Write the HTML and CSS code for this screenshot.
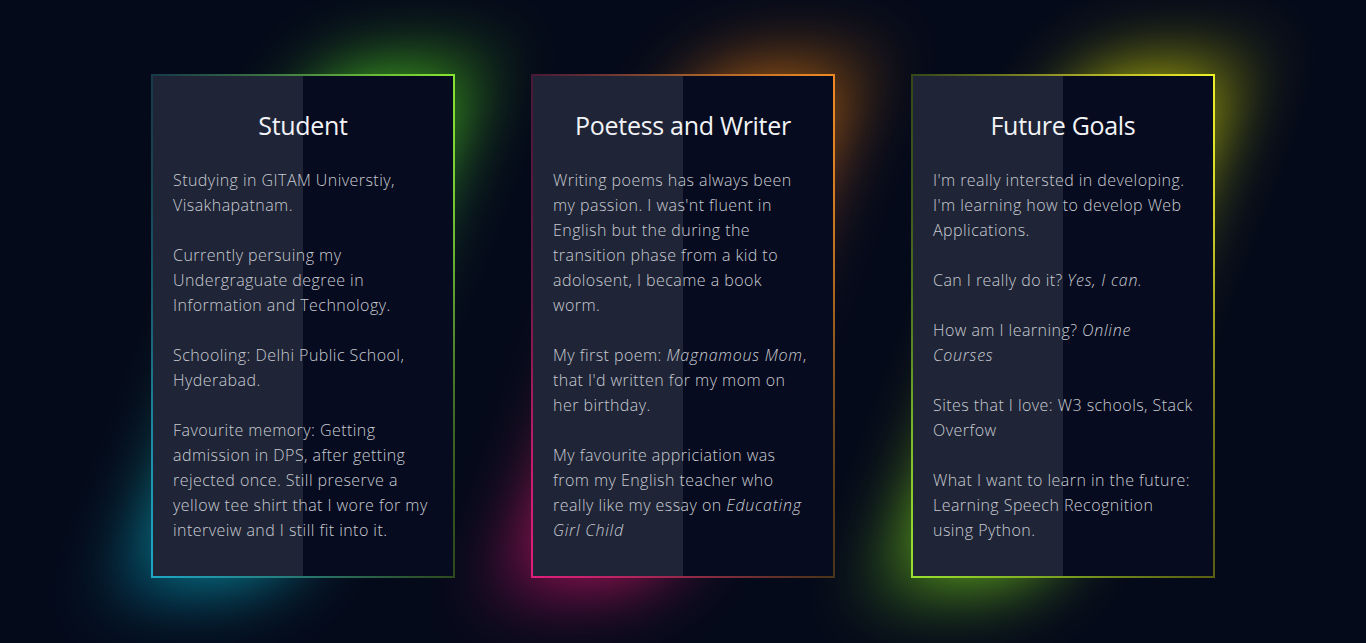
FILE: index.html
```html
<!DOCTYPE html>
<html lang="en">
<head>
<meta charset="utf-8">
<title>About Me</title>
<link rel="stylesheet" href="styles.css">
</head>
<body>
<main class="cards">
  <section class="card card-student">
    <div class="card-body">
      <h2 class="card-title">Student</h2>
      <p>Studying in GITAM Universtiy, Visakhapatnam.</p>
      <p>Currently persuing my Undergraguate degree in Information and Technology.</p>
      <p>Schooling: Delhi Public School, Hyderabad.</p>
      <p>Favourite memory: Getting admission in DPS, after getting rejected once. Still preserve a yellow tee shirt that I wore for my interveiw and I still fit into it.</p>
    </div>
  </section>
  <section class="card card-writer">
    <div class="card-body">
      <h2 class="card-title">Poetess and Writer</h2>
      <p>Writing poems has always been my passion. I was'nt fluent in English but the during the transition phase from a kid to adolosent, I became a book worm.</p>
      <p>My first poem: <em>Magnamous Mom</em>, that I'd written for my mom on her birthday.</p>
      <p>My favourite appriciation was from my English teacher who really like my essay on <em>Educating Girl Child</em></p>
    </div>
  </section>
  <section class="card card-goals">
    <div class="card-body">
      <h2 class="card-title">Future Goals</h2>
      <p>I'm really intersted in developing. I'm learning how to develop Web Applications.</p>
      <p>Can I really do it? <em>Yes, I can.</em></p>
      <p>How am I learning? <em>Online Courses</em></p>
      <p>Sites that I love: W3 schools, Stack Overfow</p>
      <p>What I want to learn in the future: Learning Speech Recognition using Python.</p>
    </div>
  </section>
</main>
</body>
</html>
```
FILE: styles.css
```css
* { box-sizing: border-box; }

html, body {
  margin: 0;
  height: 100%;
}

body {
  background: #050a1a;
  font-family: "Open Sans", "Liberation Sans", sans-serif;
  font-weight: 300;
  overflow: hidden;
}

.cards {
  display: flex;
  justify-content: center;
  align-items: flex-start;
  gap: 76px;
  padding-top: 74px;
}

.card {
  position: relative;
  width: 304px;
  height: 504px;
  padding: 2px;
}

.card::before {
  content: "";
  position: absolute;
  top: 0;
  bottom: 0;
  left: 25%;
  width: 50%;
  z-index: -1;
  transform: skewX(-20deg);
  filter: blur(40px);
  opacity: 0.85;
}

.card-student {
  background: conic-gradient(#4a8a40 0deg, #86e431 31deg, #5c9a30 80deg, #2e4a1c 149deg, #1ea6c4 211deg, #1a6a80 260deg, #163a4a 329deg, #4a8a40 360deg);
}
.card-student::before {
  background: linear-gradient(200deg, #66ff10, #2a9a60 50%, #00c0f0);
}

.card-writer {
  background: conic-gradient(#9a5a2c 0deg, #ee8a24 31deg, #a8641e 80deg, #4a3418 149deg, #e01f7c 211deg, #8a1a50 260deg, #4a1838 329deg, #9a5a2c 360deg);
}
.card-writer::before {
  background: linear-gradient(200deg, #ff9000, #a03848 50%, #ff1080);
}

.card-goals {
  background: conic-gradient(#9a9a28 0deg, #eef028 31deg, #a8aa1e 80deg, #5a5e12 149deg, #98e030 211deg, #5a8a22 260deg, #34481a 329deg, #9a9a28 360deg);
}
.card-goals::before {
  background: linear-gradient(200deg, #ffff00, #8aaa10 50%, #88ff20);
}

.card-body {
  height: 100%;
  background: linear-gradient(90deg, #1f2537 50%, #070b1f 50%);
  padding: 33px 20px 0;
  color: #c9cbd2;
  font-size: 16px;
  line-height: 25px;
  letter-spacing: 0.45px;
}

.card-title {
  margin: 0 0 27px;
  text-align: center;
  color: #f2f3f6;
  font-size: 25px;
  line-height: 32px;
  font-weight: 400;
  letter-spacing: -0.3px;
}

.card-body p {
  margin: 0 0 25px;
}

.card-body p:last-child {
  margin-bottom: 0;
}

.card-body em {
  font-style: italic;
  letter-spacing: 0.75px;
}
```
